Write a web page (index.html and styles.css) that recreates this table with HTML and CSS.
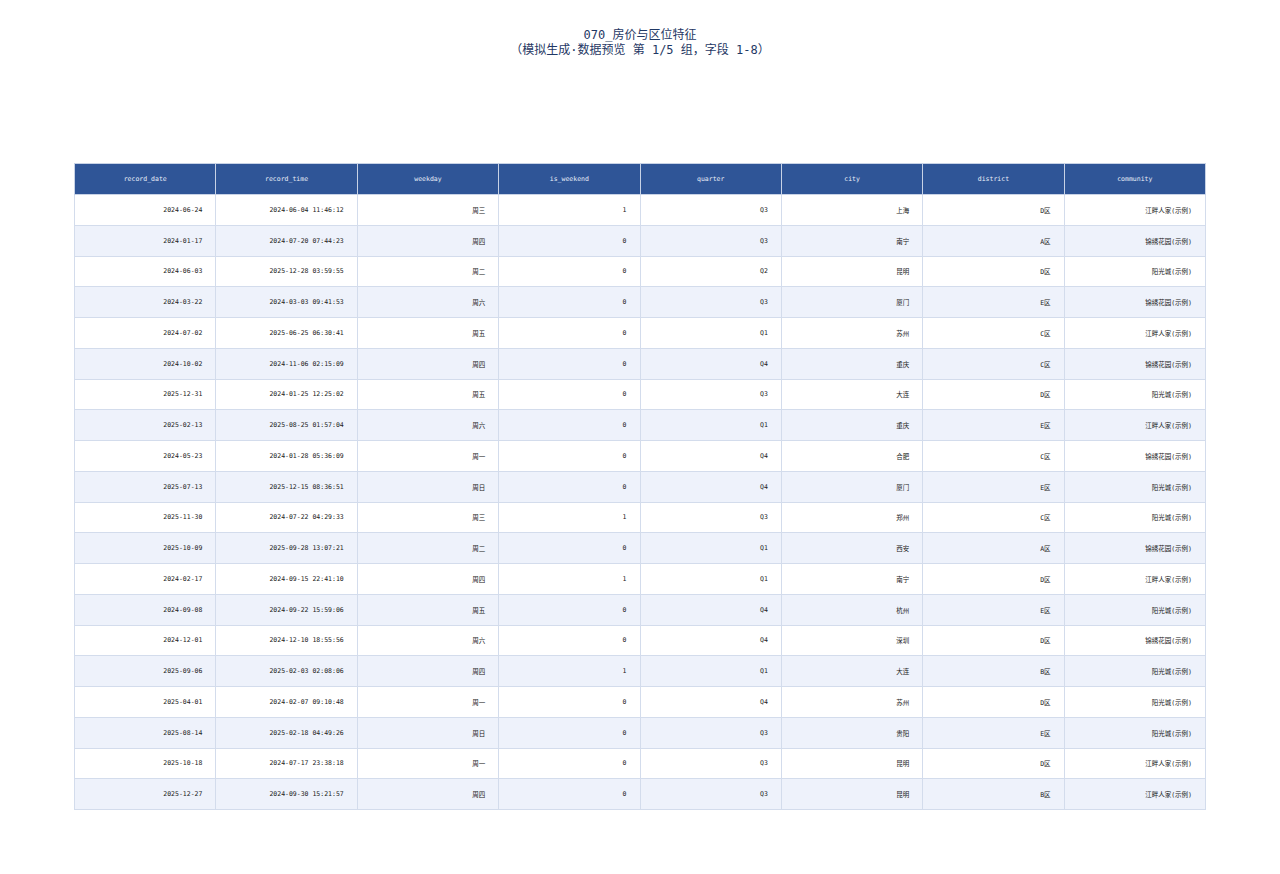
FILE: index.html
```html
<!DOCTYPE html>
<html lang="zh">
<head>
<meta charset="utf-8">
<title>070_房价与区位特征</title>
<link rel="stylesheet" href="styles.css">
</head>
<body>
<div class="title">
  <div>070_房价与区位特征</div>
  <div>（模拟生成·数据预览 第 1/5 组，字段 1-8）</div>
</div>
<table class="grid">
  <thead>
    <tr><th>record_date</th><th>record_time</th><th>weekday</th><th>is_weekend</th><th>quarter</th><th>city</th><th>district</th><th>community</th></tr>
  </thead>
  <tbody>
    <tr><td>2024-06-24</td><td>2024-06-04 11:46:12</td><td>周三</td><td>1</td><td>Q3</td><td>上海</td><td>D区</td><td>江畔人家(示例)</td></tr>
    <tr><td>2024-01-17</td><td>2024-07-20 07:44:23</td><td>周四</td><td>0</td><td>Q3</td><td>南宁</td><td>A区</td><td>锦绣花园(示例)</td></tr>
    <tr><td>2024-06-03</td><td>2025-12-28 03:59:55</td><td>周二</td><td>0</td><td>Q2</td><td>昆明</td><td>D区</td><td>阳光城(示例)</td></tr>
    <tr><td>2024-03-22</td><td>2024-03-03 09:41:53</td><td>周六</td><td>0</td><td>Q3</td><td>厦门</td><td>E区</td><td>锦绣花园(示例)</td></tr>
    <tr><td>2024-07-02</td><td>2025-06-25 06:30:41</td><td>周五</td><td>0</td><td>Q1</td><td>苏州</td><td>C区</td><td>江畔人家(示例)</td></tr>
    <tr><td>2024-10-02</td><td>2024-11-06 02:15:09</td><td>周四</td><td>0</td><td>Q4</td><td>重庆</td><td>C区</td><td>锦绣花园(示例)</td></tr>
    <tr><td>2025-12-31</td><td>2024-01-25 12:25:02</td><td>周五</td><td>0</td><td>Q3</td><td>大连</td><td>D区</td><td>阳光城(示例)</td></tr>
    <tr><td>2025-02-13</td><td>2025-08-25 01:57:04</td><td>周六</td><td>0</td><td>Q1</td><td>重庆</td><td>E区</td><td>江畔人家(示例)</td></tr>
    <tr><td>2024-05-23</td><td>2024-01-28 05:36:09</td><td>周一</td><td>0</td><td>Q4</td><td>合肥</td><td>C区</td><td>锦绣花园(示例)</td></tr>
    <tr><td>2025-07-13</td><td>2025-12-15 08:36:51</td><td>周日</td><td>0</td><td>Q4</td><td>厦门</td><td>E区</td><td>阳光城(示例)</td></tr>
    <tr><td>2025-11-30</td><td>2024-07-22 04:29:33</td><td>周三</td><td>1</td><td>Q3</td><td>郑州</td><td>C区</td><td>阳光城(示例)</td></tr>
    <tr><td>2025-10-09</td><td>2025-09-28 13:07:21</td><td>周二</td><td>0</td><td>Q1</td><td>西安</td><td>A区</td><td>锦绣花园(示例)</td></tr>
    <tr><td>2024-02-17</td><td>2024-09-15 22:41:10</td><td>周四</td><td>1</td><td>Q1</td><td>南宁</td><td>D区</td><td>江畔人家(示例)</td></tr>
    <tr><td>2024-09-08</td><td>2024-09-22 15:59:06</td><td>周五</td><td>0</td><td>Q4</td><td>杭州</td><td>E区</td><td>阳光城(示例)</td></tr>
    <tr><td>2024-12-01</td><td>2024-12-10 18:55:56</td><td>周六</td><td>0</td><td>Q4</td><td>深圳</td><td>D区</td><td>锦绣花园(示例)</td></tr>
    <tr><td>2025-09-06</td><td>2025-02-03 02:08:06</td><td>周四</td><td>1</td><td>Q1</td><td>大连</td><td>B区</td><td>阳光城(示例)</td></tr>
    <tr><td>2025-04-01</td><td>2024-02-07 09:10:48</td><td>周一</td><td>0</td><td>Q4</td><td>苏州</td><td>D区</td><td>阳光城(示例)</td></tr>
    <tr><td>2025-08-14</td><td>2025-02-18 04:49:26</td><td>周日</td><td>0</td><td>Q3</td><td>贵阳</td><td>E区</td><td>阳光城(示例)</td></tr>
    <tr><td>2025-10-18</td><td>2024-07-17 23:38:18</td><td>周一</td><td>0</td><td>Q3</td><td>昆明</td><td>D区</td><td>江畔人家(示例)</td></tr>
    <tr><td>2025-12-27</td><td>2024-09-30 15:21:57</td><td>周四</td><td>0</td><td>Q3</td><td>昆明</td><td>B区</td><td>江畔人家(示例)</td></tr>
  </tbody>
</table>
</body>
</html>
```
FILE: styles.css
```css
html, body {
  margin: 0;
  padding: 0;
  background: #ffffff;
}
body {
  font-family: "DejaVu Sans Mono", "Noto Sans CJK SC", monospace;
  color: #222222;
}
.title {
  padding-top: 28px;
  text-align: center;
  font-size: 12px;
  line-height: 15px;
  color: #1f3864;
}
.grid {
  margin: 105px auto 0;
  width: 1132px;
  border-collapse: collapse;
  table-layout: fixed;
  font-size: 6.5px;
}
.grid th {
  height: 30px;
  background: #2f5597;
  color: #e8eef8;
  font-weight: normal;
  text-align: center;
  border: 1px solid #c7d2e6;
  padding: 0;
}
.grid td {
  height: 29.75px;
  text-align: right;
  padding: 0 13px 0 4px;
  border: 1px solid #d3dcec;
  color: #222222;
}
.grid tbody tr:nth-child(even) td {
  background: #eef2fb;
}
```
